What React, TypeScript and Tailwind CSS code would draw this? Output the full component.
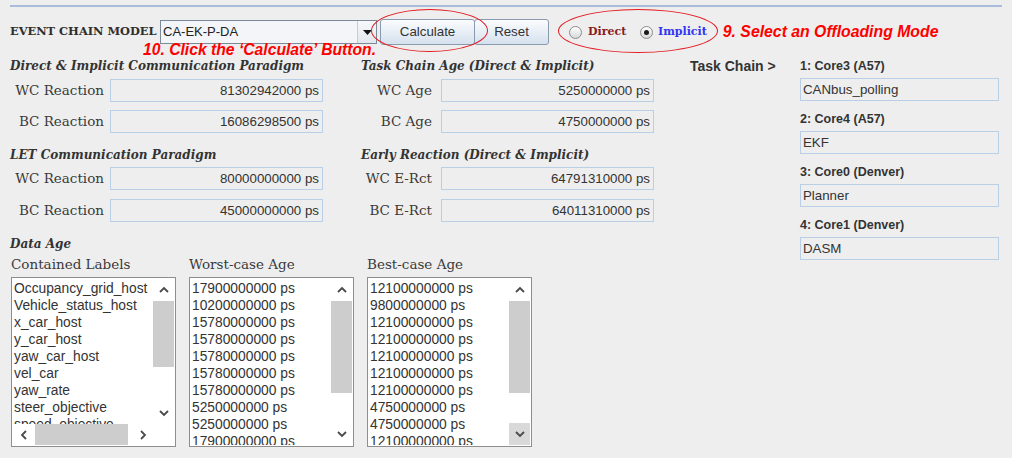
import React from 'react';

const serif = "font-['DejaVu_Serif',serif]";
const sans = "font-['Liberation_Sans',Arial,sans-serif]";

const labels = [
  'Occupancy_grid_host', 'Vehicle_status_host', 'x_car_host', 'y_car_host', 'yaw_car_host',
  'vel_car', 'yaw_rate', 'steer_objective', 'speed_objective', 'steer_rate',
];
const worst = [
  '17900000000 ps', '10200000000 ps', '15780000000 ps', '15780000000 ps', '15780000000 ps',
  '15780000000 ps', '15780000000 ps', '5250000000 ps', '5250000000 ps', '17900000000 ps',
];
const best = [
  '12100000000 ps', '9800000000 ps', '12100000000 ps', '12100000000 ps', '12100000000 ps',
  '12100000000 ps', '12100000000 ps', '4750000000 ps', '4750000000 ps', '12100000000 ps',
];

const chain = [
  { core: '1: Core3 (A57)', task: 'CANbus_polling' },
  { core: '2: Core4 (A57)', task: 'EKF' },
  { core: '3: Core0 (Denver)', task: 'Planner' },
  { core: '4: Core1 (Denver)', task: 'DASM' },
];

function Chevron({ dir }: { dir: 'up' | 'down' | 'left' | 'right' }) {
  const vertical = dir === 'up' || dir === 'down';
  const points = {
    up: '1,6 5,2 9,6',
    down: '1,2 5,6 9,2',
    left: '6,1 2,5 6,9',
    right: '2,1 6,5 2,9',
  }[dir];
  return (
    <svg width={vertical ? 10 : 8} height={vertical ? 8 : 10} viewBox={vertical ? '0 0 10 8' : '0 0 8 10'}>
      <polyline points={points} fill="none" stroke="#4a4a4a" strokeWidth="1.8" />
    </svg>
  );
}

function Heading({ children }: { children: React.ReactNode }) {
  return (
    <div className={`h-[16px] leading-[16px] text-[12px] font-bold italic text-[#333] whitespace-nowrap ${serif}`}>
      {children}
    </div>
  );
}

function Row({ label, value, labelW }: { label: string; value: string; labelW: string }) {
  return (
    <div className="flex items-center h-[23px]">
      <span className={`${labelW} text-right text-[13.5px] text-[#3a3a3a] whitespace-nowrap ${serif}`}>{label}</span>
      <div className={`ml-auto w-[213px] h-[23px] border border-[#b9cfe6] bg-[#eeeeee] flex items-center justify-end pr-[3px] text-[13.3px] text-[#333] ${sans}`}>
        {value}
      </div>
    </div>
  );
}

function ListBox({ items, thumb, hscroll, hover }: { items: string[]; thumb: string; hscroll?: boolean; hover?: boolean }) {
  return (
    <div className="w-[165px] h-[170px] mt-[5px] border border-[#8e8e8e] bg-white p-[1px] flex flex-col">
      <div className="flex flex-1 min-h-0">
        <div className={`flex-1 overflow-hidden pl-[1px] pt-[1px] text-[13.8px] leading-[17px] text-[#333] ${sans}`}>
          {items.map((t, i) => (
            <div key={i} className="whitespace-nowrap">{t}</div>
          ))}
        </div>
        <div className="w-[21px] flex flex-col">
          <div className="h-[22px] flex items-center justify-center">
            <Chevron dir="up" />
          </div>
          <div className="flex-1 min-h-0">
            <div className={`${thumb} bg-[#cdcdcd]`} />
          </div>
          <div className={`h-[22px] flex items-center justify-center ${hover ? 'bg-[#d9d9d9]' : ''}`}>
            <Chevron dir="down" />
          </div>
        </div>
      </div>
      {hscroll && (
        <div className="flex h-[21px]">
          <div className="w-[21px] flex items-center justify-center">
            <Chevron dir="left" />
          </div>
          <div className="flex-1 flex items-stretch">
            <div className="ml-[1px] w-[93px] bg-[#cdcdcd]" />
          </div>
          <div className="w-[21px] flex items-center justify-center">
            <Chevron dir="right" />
          </div>
          <div className="w-[21px]" />
        </div>
      )}
    </div>
  );
}

function Radio({ checked }: { checked?: boolean }) {
  return (
    <span className="w-[13px] h-[13px] rounded-full border border-[#8c8c8c] bg-linear-to-b from-white to-[#d8d8d8] flex items-center justify-center shrink-0">
      {checked && <span className="w-[5px] h-[5px] rounded-full bg-[#1a1a1a]" />}
    </span>
  );
}

export default function App() {
  return (
    <div className="relative w-[1012px] h-[458px] overflow-hidden bg-[#eeeeee] text-[#333]">
      {/* top rule */}
      <div className="mx-[10px] mt-[5px] h-[2px] bg-[#a9bcdb]" />

      {/* toolbar */}
      <div className="flex items-center h-[26px] mt-[12px] pl-[10px]">
        <span className={`w-[150px] text-[11.4px] font-bold text-[#2e2e2e] whitespace-nowrap ${serif}`}>EVENT CHAIN MODEL</span>
        <div className="w-[217px] h-[24px] border border-[#7a8a99] bg-[#f3f5f8] flex">
          <span className={`flex-1 pl-[2px] leading-[22px] text-[13px] text-[#222] ${sans}`}>CA-EK-P-DA</span>
          <span className="w-[19px] border-l border-[#c5ced8] bg-linear-to-b from-[#f7f9fb] to-[#e1e7ee] flex items-center justify-center">
            <svg width="9" height="5" viewBox="0 0 9 5">
              <polygon points="0,0 9,0 4.5,5" fill="#111" />
            </svg>
          </span>
        </div>
        <button className={`ml-[3px] w-[95px] h-[26px] rounded-[3px] border border-[#8a9bb0] bg-linear-to-b from-[#fbfcfe] to-[#d5e1ee] text-[13.3px] text-[#333] ${sans}`}>
          Calculate
        </button>
        <button className={`-ml-px w-[75px] h-[26px] rounded-[3px] border border-[#8a9bb0] bg-linear-to-b from-[#fbfcfe] to-[#d5e1ee] text-[13.3px] text-[#333] ${sans}`}>
          Reset
        </button>
        <label className="ml-[20px] w-[71px] flex items-center">
          <Radio />
          <span className={`ml-[6px] text-[11px] font-bold text-[#8b1c1c] ${serif}`}>Direct</span>
        </label>
        <label className="flex items-center">
          <Radio checked />
          <span className={`ml-[5px] text-[11px] font-bold text-[#3434f2] ${serif}`}>Implicit</span>
        </label>
        <span className={`ml-[16px] text-[15.8px] font-bold italic text-[#ff0000] whitespace-nowrap ${sans}`}>
          9. Select an Offloading Mode
        </span>
      </div>

      {/* main */}
      <div className="flex mt-[13px] pl-[10px]">
        <div className="w-[660px] flex flex-col">
          <div className="flex">
            <div className="w-[313px] flex flex-col">
              <Heading>Direct &amp; Implicit Communication Paradigm</Heading>
              <div className="mt-[5px] flex flex-col gap-[8px]">
                <Row labelW="w-[94px]" label="WC Reaction" value="81302942000 ps" />
                <Row labelW="w-[94px]" label="BC Reaction" value="16086298500 ps" />
              </div>
              <div className="mt-[14px]">
                <Heading>LET Communication Paradigm</Heading>
              </div>
              <div className="mt-[4px] flex flex-col gap-[9px]">
                <Row labelW="w-[94px]" label="WC Reaction" value="80000000000 ps" />
                <Row labelW="w-[94px]" label="BC Reaction" value="45000000000 ps" />
              </div>
            </div>
            <div className="ml-[38px] w-[293px] flex flex-col">
              <Heading>Task Chain Age (Direct &amp; Implicit)</Heading>
              <div className="mt-[5px] flex flex-col gap-[8px]">
                <Row labelW="w-[71px]" label="WC Age" value="5250000000 ps" />
                <Row labelW="w-[71px]" label="BC Age" value="4750000000 ps" />
              </div>
              <div className="mt-[14px]">
                <Heading>Early Reaction (Direct &amp; Implicit)</Heading>
              </div>
              <div className="mt-[4px] flex flex-col gap-[9px]">
                <Row labelW="w-[71px]" label="WC E-Rct" value="64791310000 ps" />
                <Row labelW="w-[71px]" label="BC E-Rct" value="64011310000 ps" />
              </div>
            </div>
          </div>

          {/* data age */}
          <div className="mt-[14px]">
            <Heading>Data Age</Heading>
          </div>
          <div className="mt-[4px] pl-[1px] flex gap-[13px]">
            <div className="flex flex-col">
              <span className={`h-[16px] leading-[16px] text-[13.5px] text-[#3a3a3a] ${serif}`}>Contained Labels</span>
              <ListBox items={labels} thumb="h-[66px]" hscroll />
            </div>
            <div className="flex flex-col">
              <span className={`h-[16px] leading-[16px] text-[13.5px] text-[#3a3a3a] ${serif}`}>Worst-case Age</span>
              <ListBox items={worst} thumb="h-[92px]" />
            </div>
            <div className="flex flex-col">
              <span className={`h-[16px] leading-[16px] text-[13.5px] text-[#3a3a3a] ${serif}`}>Best-case Age</span>
              <ListBox items={best} thumb="h-[92px]" hover />
            </div>
          </div>
        </div>

        {/* task chain */}
        <span className={`ml-[20px] w-[110px] h-[16px] leading-[16px] text-[14px] font-bold text-[#333] whitespace-nowrap ${sans}`}>
          Task Chain &gt;
        </span>
        <div className="w-[199px] flex flex-col">
          {chain.map((c, i) => (
            <div key={c.core} className={i === 0 ? '' : 'mt-[10px]'}>
              <div className={`h-[16px] leading-[16px] text-[12.5px] font-bold text-[#333] whitespace-nowrap ${sans}`}>{c.core}</div>
              <div className={`mt-[4px] h-[23px] border border-[#b9cfe6] bg-[#eeeeee] flex items-center pl-[2px] text-[13.3px] text-[#333] ${sans}`}>
                {c.task}
              </div>
            </div>
          ))}
        </div>
      </div>

      {/* annotations */}
      <span className={`absolute left-[143px] top-[41px] leading-[18px] text-[15.7px] font-bold italic text-[#ff0000] whitespace-nowrap ${sans}`}>
        10. Click the ‘Calculate’ Button.
      </span>
      <div className="absolute left-[371px] top-[9px] w-[117px] h-[43px] rounded-[50%] border border-[#e3191f] pointer-events-none" />
      <div className="absolute left-[558px] top-[9px] w-[160px] h-[44px] rounded-[50%] border border-[#e3191f] pointer-events-none" />
    </div>
  );
}
